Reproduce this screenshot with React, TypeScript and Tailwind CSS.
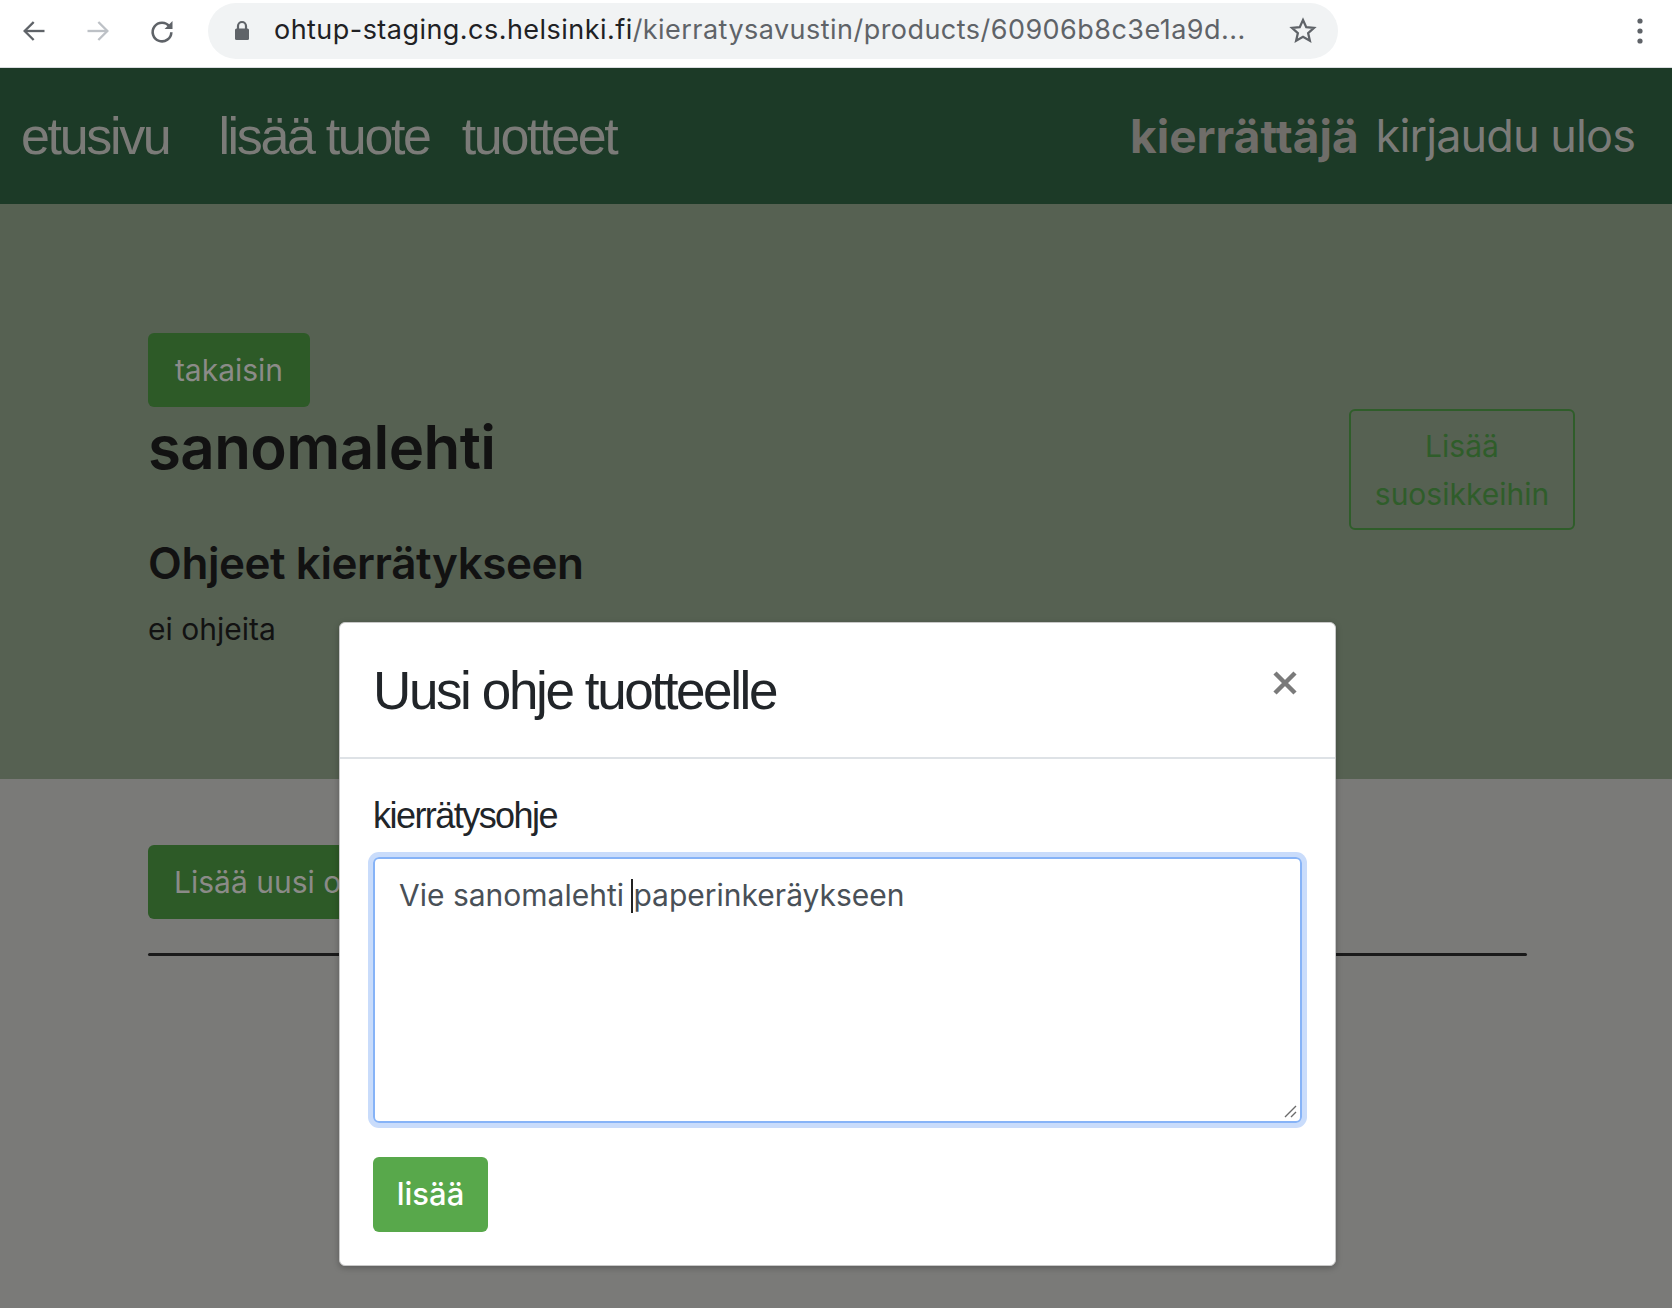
import React from "react";

function BackIcon({ color }: { color: string }) {
  return (
    <svg width="28" height="28" viewBox="0 0 24 24" fill="none" stroke={color} strokeWidth="2" strokeLinecap="square">
      <path d="M20 12H5" />
      <path d="M11 5l-7 7 7 7" />
    </svg>
  );
}
function FwdIcon({ color }: { color: string }) {
  return (
    <svg width="28" height="28" viewBox="0 0 24 24" fill="none" stroke={color} strokeWidth="2" strokeLinecap="square">
      <path d="M4 12h15" />
      <path d="M13 5l7 7-7 7" />
    </svg>
  );
}
function ReloadIcon() {
  return (
    <svg width="28" height="28" viewBox="0 0 24 24" fill="none">
      <path d="M18.5 8.2A8 8 0 1 0 20 13" stroke="#5f6368" strokeWidth="2.2" />
      <path d="M21 3.5v6.8h-6.8z" fill="#5f6368" />
    </svg>
  );
}
function LockIcon() {
  return (
    <svg width="16" height="21" viewBox="0 0 16 21">
      <path d="M4 9V6a4 4 0 0 1 8 0v3" stroke="#5f6368" strokeWidth="2.2" fill="none" />
      <rect x="1" y="8.5" width="14" height="11.5" rx="1.5" fill="#5f6368" />
    </svg>
  );
}
function StarIcon() {
  return (
    <svg width="30" height="30" viewBox="0 0 24 24" fill="none" stroke="#5f6368" strokeWidth="1.8" strokeLinejoin="miter">
      <path d="M12 3.2l2.6 5.7 6.2.6-4.7 4.2 1.4 6.1L12 16.6l-5.5 3.2 1.4-6.1-4.7-4.2 6.2-.6z" />
    </svg>
  );
}
function Kebab() {
  return (
    <svg width="8" height="28" viewBox="0 0 8 28">
      <circle cx="4" cy="4" r="2.6" fill="#5f6368" />
      <circle cx="4" cy="14" r="2.6" fill="#5f6368" />
      <circle cx="4" cy="24" r="2.6" fill="#5f6368" />
    </svg>
  );
}

export default function App() {
  return (
    <div className="relative w-[1672px] h-[1308px] overflow-hidden bg-[#7a7a78] font-['Inter',sans-serif]">
      {/* browser chrome */}
      <div className="h-[68px] bg-white border-b border-[#dadce0] flex items-center pb-[6px]">
        <div className="flex items-center pl-[2px]">
          <div className="w-[64px] flex justify-center"><BackIcon color="#5f6368" /></div>
          <div className="w-[64px] flex justify-center"><FwdIcon color="#bdc1c6" /></div>
          <div className="w-[64px] flex justify-center"><ReloadIcon /></div>
        </div>
        <div className="ml-[14px] w-[1130px] h-[56px] rounded-full bg-[#f1f3f4] flex items-center pl-[26px] pr-[20px]">
          <LockIcon />
          <div className="ml-[24px] text-[27px] tracking-[0.017em] text-[#202124] whitespace-nowrap">
            ohtup-staging.cs.helsinki.fi<span className="text-[#5f6368]">/kierratysavustin/products/60906b8c3e1a9d...</span>
          </div>
          <div className="ml-auto"><StarIcon /></div>
        </div>
        <div className="ml-auto mr-[28px]"><Kebab /></div>
      </div>

      {/* navbar */}
      <div className="h-[136px] bg-[#1c3a27] flex items-center pl-[21px] pr-[37px]">
        <span className="text-[52px] tracking-[-0.045em] text-[#7b7b78] font-['Liberation_Sans',sans-serif]">etusivu</span>
        <span className="ml-[49px] text-[52px] tracking-[-0.045em] text-[#7b7b78] font-['Liberation_Sans',sans-serif]">lisää tuote</span>
        <span className="ml-[32px] text-[52px] tracking-[-0.045em] text-[#7b7b78] font-['Liberation_Sans',sans-serif]">tuotteet</span>
        <span className="ml-auto text-[46px] font-bold text-[#6f6d69]">kierrättäjä</span>
        <span className="ml-[17px] text-[45px] tracking-[-0.02em] text-[#7b7b78]">kirjaudu ulos</span>
      </div>

      {/* jumbotron */}
      <div className="h-[575px] bg-[#566152] flex pl-[148px] pr-[97px] pt-[129px]">
        <div className="flex flex-col items-start">
          <div className="h-[74px] w-[162px] rounded-[6px] bg-[#2d5a27] flex items-center justify-center text-[30px] text-[#8b8b88]">
            takaisin
          </div>
          <h1 className="mt-[3px] text-[60px] leading-[74px] font-semibold text-[#121212] tracking-[-0.01em]">sanomalehti</h1>
          <h2 className="mt-[52px] text-[44px] leading-[55px] font-semibold text-[#121212] tracking-[-0.01em]">Ohjeet kierrätykseen</h2>
          <p className="mt-[20px] text-[30px] leading-[36px] text-[#121212]">ei ohjeita</p>
        </div>
        <div className="ml-auto mt-[76px] w-[226px] h-[121px] border-2 border-[#2f5d2a] rounded-[6px] flex flex-col items-center justify-center text-[30px] leading-[48px] text-[#2f5d2a]">
          <span>Lisää</span>
          <span>suosikkeihin</span>
        </div>
      </div>

      {/* lower area */}
      <div className="pl-[148px] pt-[66px]">
        <div className="h-[74px] inline-flex items-center px-[26px] rounded-[6px] bg-[#2d5a27] text-[30px] text-[#8b8b88]">
          Lisää uusi ohje
        </div>
        <div className="mt-[34px] h-[3px] w-[1379px] bg-[#1a1a1a] rounded-full" />
      </div>

      {/* modal */}
      <div className="absolute left-[339px] top-[622px] w-[997px] bg-white rounded-[6px] border border-[#c8c8c8] shadow-[0_2px_6px_rgba(0,0,0,0.25)]">
        <div className="h-[136px] border-b-2 border-[#dee2e6] flex items-start pl-[33px] pr-[37px]">
          <h3 className="mt-[36px] text-[53px] leading-[64px] tracking-[-0.045em] text-[#212529] font-['Liberation_Sans',sans-serif]">
            Uusi ohje tuotteelle
          </h3>
          <div className="ml-auto mt-[47px]">
            <svg width="26" height="26" viewBox="0 0 26 26" stroke="#7a7a7a" strokeWidth="4.5" strokeLinecap="butt">
              <path d="M3 3l20 20M23 3L3 23" />
            </svg>
          </div>
        </div>
        <div className="px-[33px] pt-[37px] pb-[33px]">
          <div className="text-[36px] leading-[40px] tracking-[-0.043em] text-[#212529] font-['Liberation_Sans',sans-serif]">
            kierrätysohje
          </div>
          <div className="relative mt-[21px] h-[266px] rounded-[6px] border-2 border-[#86b3f7] ring-[5px] ring-[#c9dcfb] pl-[24px] pt-[14px]">
            <div className="text-[30px] leading-[45px] text-[#495057]">
              Vie sanomalehti <span className="inline-block w-[2px] h-[34px] bg-[#222] align-[-7px] -ml-[1px]" />paperinkeräykseen
            </div>
            <svg className="absolute right-[2px] bottom-[2px]" width="16" height="16" viewBox="0 0 16 16" stroke="#6b6b6b" strokeWidth="1.4">
              <path d="M14 3L3 14M14 9L9 14" />
            </svg>
          </div>
          <div className="mt-[34px] h-[75px] w-[115px] rounded-[6px] bg-[#58a84b] flex items-center justify-center text-[31px] font-medium text-white">
            lisää
          </div>
        </div>
      </div>
    </div>
  );
}
